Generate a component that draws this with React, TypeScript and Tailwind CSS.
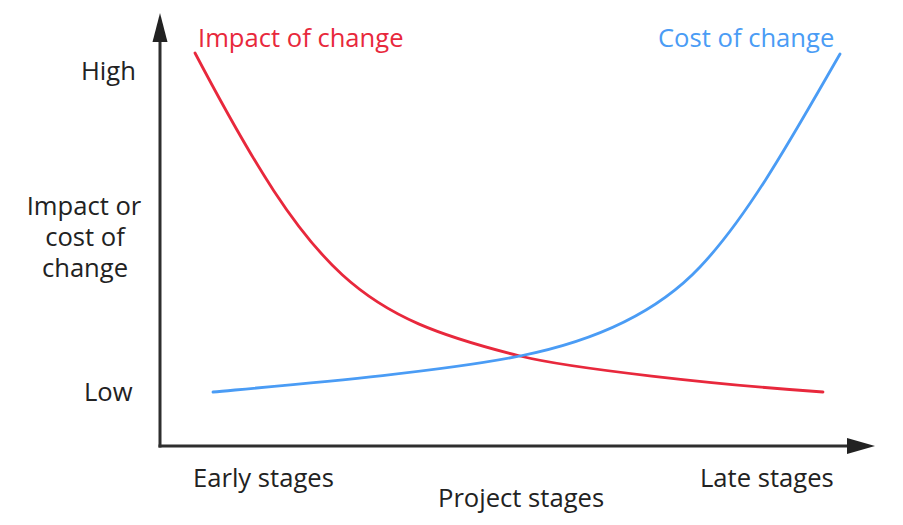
// curve paths, fitted by hand against the reference
const redPath =
  "M195,53 C315,281 360,316 520,356 C570,368.5 720,385 823,392";
const bluePath =
  "M213,392 C300,384 440,372 520,356 C580,344 650,320 700,267 C750,214 795,132 840,54";

function ChangeChart() {
  return (
    <svg
      viewBox="0 0 903 525"
      className="block h-[525px] w-[903px] font-['Open_Sans',sans-serif] text-[25.6px]"
    >
      {/* axes */}
      <line x1="160" y1="40" x2="160" y2="447.5" stroke="#2e2e2e" strokeWidth="3" />
      <polygon points="160,13 152.5,42 167.5,42" fill="#222" />
      <line x1="158.5" y1="446" x2="850" y2="446" stroke="#2e2e2e" strokeWidth="3" />
      <polygon points="875,446 847,438 847,454" fill="#222" />

      {/* curves */}
      <path d={redPath} fill="none" stroke="#e8283c" strokeWidth="2.8" strokeLinecap="round" />
      <path d={bluePath} fill="none" stroke="#4a9cf5" strokeWidth="2.8" strokeLinecap="round" />

      {/* series labels */}
      <text x="198" y="47" className="fill-[#e8283c]">Impact of change</text>
      <text x="658" y="47" className="fill-[#4a9cf5]">Cost of change</text>

      {/* y axis labels */}
      <g className="fill-[#222]">
        <text x="81" y="80">High</text>
        <text y="215" textAnchor="middle">
          <tspan x="84">Impact or</tspan>
          <tspan x="85" dy="31">cost of</tspan>
          <tspan x="85" dy="31">change</tspan>
        </text>
        <text x="84" y="401">Low</text>

        {/* x axis labels */}
        <text x="193" y="487">Early stages</text>
        <text x="700" y="487">Late stages</text>
        <text x="438" y="507">Project stages</text>
      </g>
    </svg>
  );
}

export default function App() {
  return (
    <div className="h-[525px] w-[903px] overflow-hidden bg-white">
      <ChangeChart />
    </div>
  );
}
